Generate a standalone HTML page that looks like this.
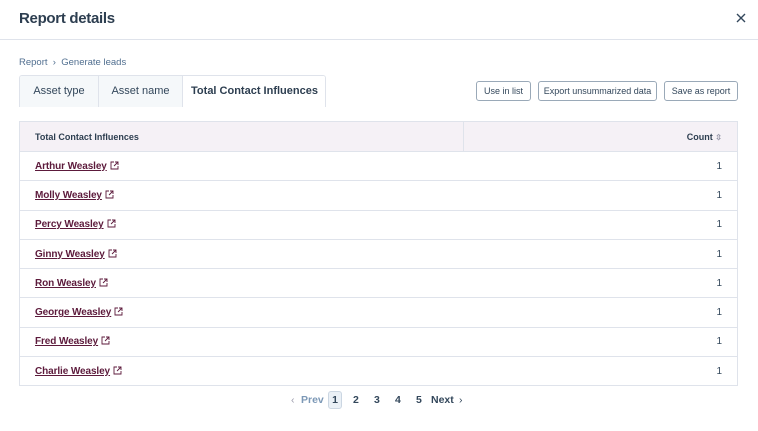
<!DOCTYPE html><html><head><style>
*{box-sizing:border-box;margin:0;padding:0}
body{width:758px;height:431px;background:#fff;font-family:"Liberation Sans",sans-serif;color:#33475b;position:relative;overflow:hidden}
.hdr{height:40px;border-bottom:1px solid #dfe3eb;position:relative}
.hdr h1{position:absolute;left:19px;top:10px;font-size:15px;font-weight:600;color:#2d3e50;letter-spacing:-0.3px}
.x{position:absolute;left:736px;top:13px}
.bc{position:absolute;left:19px;top:57px;font-size:9.5px;color:#516f90}
.tabs{position:absolute;left:19px;top:75px;height:32px;width:307px;border:1px solid #dfe3eb;border-bottom:none;border-radius:3px 3px 0 0;overflow:hidden}
.tab{position:absolute;top:0;height:31px;background:#f5f8fa;font-size:11px;line-height:31px;text-align:center;white-space:nowrap;border-right:1px solid #dfe3eb}
.tab.a{background:#fff;font-weight:bold;border-right:none;color:#2d3e50}
.btn{position:absolute;top:81px;height:20px;border:1px solid #9aa9b8;border-radius:3px;font-size:9px;line-height:18px;text-align:center;color:#33475b;background:#fff;white-space:nowrap}
table{position:absolute;left:19px;top:121px;width:719px;border-collapse:collapse;border:1px solid #dfe3eb}
th{background:#f5f1f6;height:30px;font-size:9px;text-align:left;padding-left:15px;color:#2d3e50;border:1px solid #dfe3eb}
th.r{text-align:right;padding-right:15px}
td{height:29.3px;border-top:1px solid #dfe3eb;font-size:10px;padding-left:15px}
td.r{text-align:right;padding-right:15px;color:#33475b}
a{color:#5c1a3b;font-weight:bold;text-decoration:underline;letter-spacing:-0.1px}
.ext{display:inline-block;vertical-align:-1px;margin-left:3px}
.pg{position:absolute;top:392px;left:0;width:758px;height:16px;font-size:10.5px;font-weight:bold;color:#33475b}
.pg span{position:absolute;top:0;line-height:16px}
.cur{border:1px solid #cbd6e2;background:#eaf0f6;border-radius:3px;height:18px;width:14px;text-align:center;top:-1px!important}
</style></head><body>
<div class="hdr"><h1>Report details</h1>
<svg class="x" width="10" height="10" viewBox="0 0 10 10"><path d="M1 1L9 9M9 1L1 9" stroke="#33475b" stroke-width="1.4"/></svg></div>
<div class="bc">Report &nbsp;›&nbsp; Generate leads</div>
<div class="tabs"><div class="tab" style="left:0;width:79px">Asset type</div><div class="tab" style="left:79px;width:84px">Asset name</div><div class="tab a" style="left:163px;width:143px">Total Contact Influences</div></div>
<div class="btn" style="left:476px;width:55px">Use in list</div>
<div class="btn" style="left:538px;width:119px">Export unsummarized data</div>
<div class="btn" style="left:664px;width:74px">Save as report</div>
<table>
<tr><th style="width:444px">Total Contact Influences</th><th class="r">Count <span style="color:#99a;font-size:8px">⇳</span></th></tr>
<tr><td><a>Arthur Weasley</a><svg class="ext" width="9" height="9" viewBox="0 0 9 9"><path d="M4 1H1V8H8V5M5 1H8V4M8 1L4 5" fill="none" stroke="#5c1a3b" stroke-width="0.9"/></svg></td><td class="r">1</td></tr>
<tr><td><a>Molly Weasley</a><svg class="ext" width="9" height="9" viewBox="0 0 9 9"><path d="M4 1H1V8H8V5M5 1H8V4M8 1L4 5" fill="none" stroke="#5c1a3b" stroke-width="0.9"/></svg></td><td class="r">1</td></tr>
<tr><td><a>Percy Weasley</a><svg class="ext" width="9" height="9" viewBox="0 0 9 9"><path d="M4 1H1V8H8V5M5 1H8V4M8 1L4 5" fill="none" stroke="#5c1a3b" stroke-width="0.9"/></svg></td><td class="r">1</td></tr>
<tr><td><a>Ginny Weasley</a><svg class="ext" width="9" height="9" viewBox="0 0 9 9"><path d="M4 1H1V8H8V5M5 1H8V4M8 1L4 5" fill="none" stroke="#5c1a3b" stroke-width="0.9"/></svg></td><td class="r">1</td></tr>
<tr><td><a>Ron Weasley</a><svg class="ext" width="9" height="9" viewBox="0 0 9 9"><path d="M4 1H1V8H8V5M5 1H8V4M8 1L4 5" fill="none" stroke="#5c1a3b" stroke-width="0.9"/></svg></td><td class="r">1</td></tr>
<tr><td><a>George Weasley</a><svg class="ext" width="9" height="9" viewBox="0 0 9 9"><path d="M4 1H1V8H8V5M5 1H8V4M8 1L4 5" fill="none" stroke="#5c1a3b" stroke-width="0.9"/></svg></td><td class="r">1</td></tr>
<tr><td><a>Fred Weasley</a><svg class="ext" width="9" height="9" viewBox="0 0 9 9"><path d="M4 1H1V8H8V5M5 1H8V4M8 1L4 5" fill="none" stroke="#5c1a3b" stroke-width="0.9"/></svg></td><td class="r">1</td></tr>
<tr><td><a>Charlie Weasley</a><svg class="ext" width="9" height="9" viewBox="0 0 9 9"><path d="M4 1H1V8H8V5M5 1H8V4M8 1L4 5" fill="none" stroke="#5c1a3b" stroke-width="0.9"/></svg></td><td class="r">1</td></tr>
</table>
<div class="pg"><span style="left:291px;color:#99a;font-weight:normal">‹</span><span style="left:301px;color:#7c98b6">Prev</span><span class="cur" style="left:328px">1</span><span style="left:353px">2</span><span style="left:374px">3</span><span style="left:395px">4</span><span style="left:416px">5</span><span style="left:431px">Next</span><span style="left:459px;font-weight:normal">›</span></div>
</body></html>
